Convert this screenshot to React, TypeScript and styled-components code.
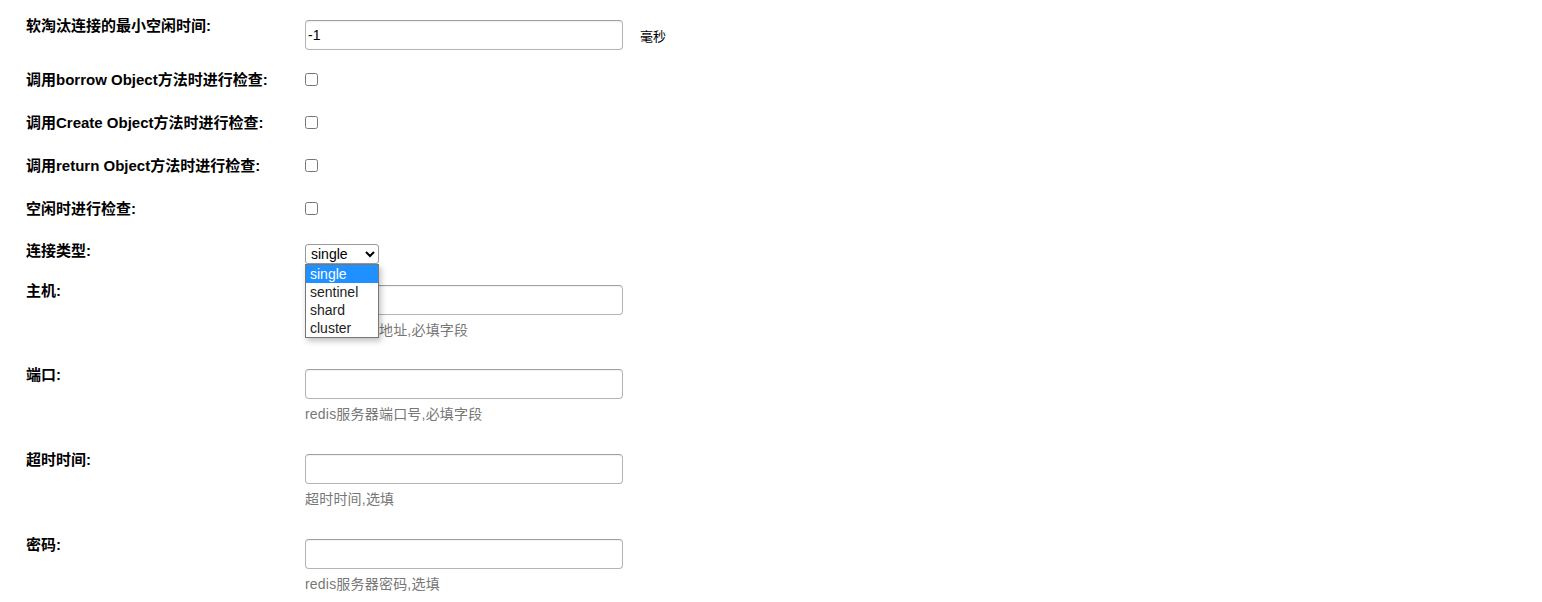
import React from "react";
import styled, { createGlobalStyle } from "styled-components";

const GlobalStyle = createGlobalStyle`
  html, body { margin: 0; padding: 0; background: #fff; }
  body { font-family: "Liberation Sans", Arial, "Noto Sans CJK SC", sans-serif; color: #000; }
`;

const Form = styled.form`
  padding: 18px 0 0 26px;
  display: flex;
  flex-direction: column;
`;

const Row = styled.div<{ $space: number; $raised?: boolean }>`
  display: grid;
  grid-template-columns: 279px auto;
  align-items: start;
  margin-bottom: ${(p) => p.$space}px;
  position: ${(p) => (p.$raised ? "relative" : "static")};
  z-index: ${(p) => (p.$raised ? 5 : "auto")};
`;

const Label = styled.label`
  font-size: 15px;
  line-height: 16px;
  font-weight: bold;
  white-space: nowrap;
`;

const Control = styled.div`
  display: flex;
  flex-direction: column;
  align-items: flex-start;
`;

const Inline = styled.div`
  display: flex;
  align-items: center;
  gap: 17px;
`;

const TextInput = styled.input`
  box-sizing: border-box;
  width: 318px;
  height: 30px;
  margin: 2px 0 0 0;
  padding: 0 2px;
  border: 1px solid #b4b4b4;
  border-top-color: #a0a0a0;
  border-radius: 4px;
  box-shadow: inset 0 1px 1px rgba(0, 0, 0, 0.06);
  font: 14px "Liberation Sans", Arial, sans-serif;
  color: #000;
  outline: none;
`;

const Unit = styled.span`
  font-size: 13px;
  margin-top: 2px;
`;

const Check = styled.input`
  width: 13px;
  height: 13px;
  margin: 1px 0 0 0;
`;

const Help = styled.div`
  margin-top: 5px;
  font-size: 14px;
  line-height: 20px;
  color: #777;
  white-space: nowrap;
  letter-spacing: 0.2px;
`;

const SelectWrap = styled.div`
  position: relative;
  margin-top: 1px;
`;

const Select = styled.select`
  box-sizing: border-box;
  width: 74px;
  height: 20px;
  margin: 0;
  font: 14px "Liberation Sans", Arial, sans-serif;
  color: #000;
  border: 1px solid #9a9a9a;
  border-radius: 3px;
  background: #fff;
  padding: 0 0 0 1px;
`;

const OptionList = styled.ul`
  position: absolute;
  top: 20px;
  left: 0;
  width: 74px;
  box-sizing: border-box;
  margin: 0;
  padding: 0;
  list-style: none;
  background: #fff;
  border: 1px solid #767676;
  box-shadow: 2px 3px 6px rgba(0, 0, 0, 0.25);
  z-index: 10;
`;

const OptionItem = styled.li<{ $active?: boolean }>`
  height: 18px;
  line-height: 18px;
  padding-left: 4px;
  font-size: 14px;
  color: ${(p) => (p.$active ? "#fff" : "#222")};
  background: ${(p) => (p.$active ? "#1e90ff" : "#fff")};
`;

const checks = [
  "调用borrow Object方法时进行检查:",
  "调用Create Object方法时进行检查:",
  "调用return Object方法时进行检查:",
  "空闲时进行检查:",
];

const fields = [
  { label: "主机:", help: "redis服务器地址,必填字段", space: 27 },
  { label: "端口:", help: "redis服务器端口号,必填字段", space: 28 },
  { label: "超时时间:", help: "超时时间,选填", space: 28 },
  { label: "密码:", help: "redis服务器密码,选填", space: 28 },
];

export default function App() {
  return (
    <>
      <GlobalStyle />
      <Form>
        <Row $space={22}>
          <Label>软淘汰连接的最小空闲时间:</Label>
          <Inline>
            <TextInput defaultValue="-1" />
            <Unit>毫秒</Unit>
          </Inline>
        </Row>
        {checks.map((c, i) => (
          <Row key={c} $space={i === checks.length - 1 ? 26 : 27}>
            <Label>{c}</Label>
            <Control>
              <Check type="checkbox" />
            </Control>
          </Row>
        ))}
        <Row $space={19} $raised>
          <Label>连接类型:</Label>
          <Control>
            <SelectWrap>
              <Select defaultValue="single">
                <option value="single">single</option>
                <option value="sentinel">sentinel</option>
                <option value="shard">shard</option>
                <option value="cluster">cluster</option>
              </Select>
              <OptionList>
                <OptionItem $active>single</OptionItem>
                <OptionItem>sentinel</OptionItem>
                <OptionItem>shard</OptionItem>
                <OptionItem>cluster</OptionItem>
              </OptionList>
            </SelectWrap>
          </Control>
        </Row>
        {fields.map((f) => (
          <Row key={f.label} $space={f.space}>
            <Label>{f.label}</Label>
            <Control>
              <TextInput />
              <Help>{f.help}</Help>
            </Control>
          </Row>
        ))}
      </Form>
    </>
  );
}
